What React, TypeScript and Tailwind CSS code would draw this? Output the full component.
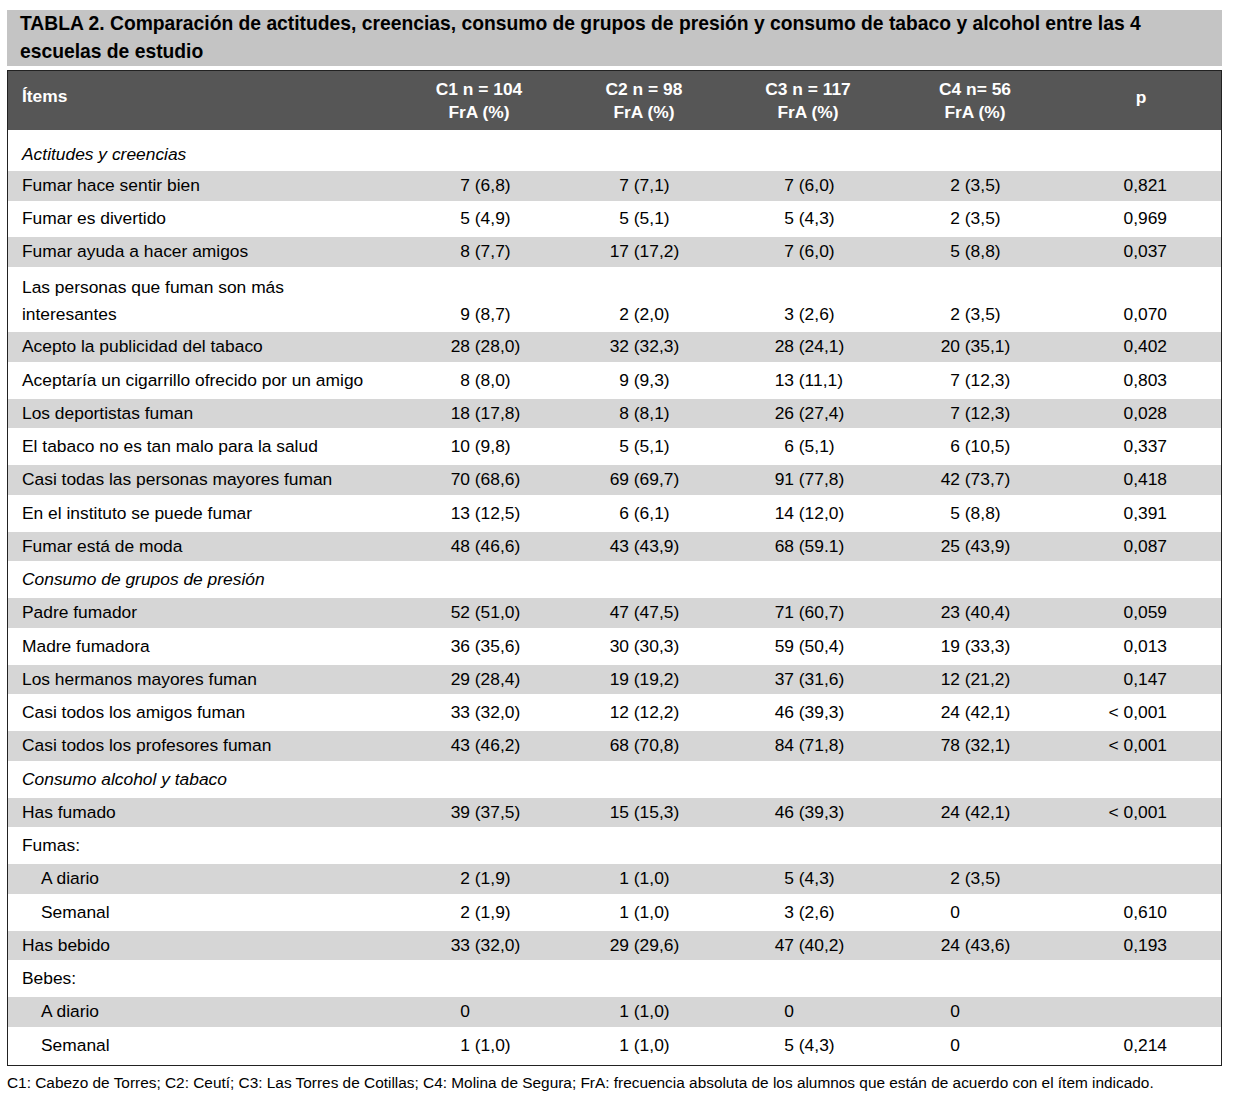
import React from "react";

type Row = {
  label: string;
  label2?: string;
  vals?: [string, string, string, string];
  p?: string;
  kind: "cat" | "row" | "sub";
  gray?: boolean;
  indent?: boolean;
  first?: boolean;
};

const rows: Row[] = [
  { label: "Actitudes y creencias", kind: "cat", first: true },
  { label: "Fumar hace sentir bien", vals: ["7 (6,8)", "7 (7,1)", "7 (6,0)", "2 (3,5)"], p: "0,821", kind: "row", gray: true },
  { label: "Fumar es divertido", vals: ["5 (4,9)", "5 (5,1)", "5 (4,3)", "2 (3,5)"], p: "0,969", kind: "row" },
  { label: "Fumar ayuda a hacer amigos", vals: ["8 (7,7)", "17 (17,2)", "7 (6,0)", "5 (8,8)"], p: "0,037", kind: "row", gray: true },
  { label: "Las personas que fuman son más", label2: "interesantes", vals: ["9 (8,7)", "2 (2,0)", "3 (2,6)", "2 (3,5)"], p: "0,070", kind: "row" },
  { label: "Acepto la publicidad del tabaco", vals: ["28 (28,0)", "32 (32,3)", "28 (24,1)", "20 (35,1)"], p: "0,402", kind: "row", gray: true },
  { label: "Aceptaría un cigarrillo ofrecido por un amigo", vals: ["8 (8,0)", "9 (9,3)", "13 (11,1)", "7 (12,3)"], p: "0,803", kind: "row" },
  { label: "Los deportistas fuman", vals: ["18 (17,8)", "8 (8,1)", "26 (27,4)", "7 (12,3)"], p: "0,028", kind: "row", gray: true },
  { label: "El tabaco no es tan malo para la salud", vals: ["10 (9,8)", "5 (5,1)", "6 (5,1)", "6 (10,5)"], p: "0,337", kind: "row" },
  { label: "Casi todas las personas mayores fuman", vals: ["70 (68,6)", "69 (69,7)", "91 (77,8)", "42 (73,7)"], p: "0,418", kind: "row", gray: true },
  { label: "En el instituto se puede fumar", vals: ["13 (12,5)", "6 (6,1)", "14 (12,0)", "5 (8,8)"], p: "0,391", kind: "row" },
  { label: "Fumar está de moda", vals: ["48 (46,6)", "43 (43,9)", "68 (59.1)", "25 (43,9)"], p: "0,087", kind: "row", gray: true },
  { label: "Consumo de grupos de presión", kind: "cat" },
  { label: "Padre fumador", vals: ["52 (51,0)", "47 (47,5)", "71 (60,7)", "23 (40,4)"], p: "0,059", kind: "row", gray: true },
  { label: "Madre fumadora", vals: ["36 (35,6)", "30 (30,3)", "59 (50,4)", "19 (33,3)"], p: "0,013", kind: "row" },
  { label: "Los hermanos mayores fuman", vals: ["29 (28,4)", "19 (19,2)", "37 (31,6)", "12 (21,2)"], p: "0,147", kind: "row", gray: true },
  { label: "Casi todos los amigos fuman", vals: ["33 (32,0)", "12 (12,2)", "46 (39,3)", "24 (42,1)"], p: "< 0,001", kind: "row" },
  { label: "Casi todos los profesores fuman", vals: ["43 (46,2)", "68 (70,8)", "84 (71,8)", "78 (32,1)"], p: "< 0,001", kind: "row", gray: true },
  { label: "Consumo alcohol y tabaco", kind: "cat" },
  { label: "Has fumado", vals: ["39 (37,5)", "15 (15,3)", "46 (39,3)", "24 (42,1)"], p: "< 0,001", kind: "row", gray: true },
  { label: "Fumas:", kind: "sub" },
  { label: "A diario", vals: ["2 (1,9)", "1 (1,0)", "5 (4,3)", "2 (3,5)"], p: "", kind: "row", gray: true, indent: true },
  { label: "Semanal", vals: ["2 (1,9)", "1 (1,0)", "3 (2,6)", "0"], p: "0,610", kind: "row", indent: true },
  { label: "Has bebido", vals: ["33 (32,0)", "29 (29,6)", "47 (40,2)", "24 (43,6)"], p: "0,193", kind: "row", gray: true },
  { label: "Bebes:", kind: "sub" },
  { label: "A diario", vals: ["0", "1 (1,0)", "0", "0"], p: "", kind: "row", gray: true, indent: true },
  { label: "Semanal", vals: ["1 (1,0)", "1 (1,0)", "5 (4,3)", "0"], p: "0,214", kind: "row", indent: true },
];

const cellW = ["w-[165px]", "w-[165px]", "w-[165px]", "w-[165px]"];
const intW = ["w-[60px]", "w-[54px]", "w-[54px]", "w-[55px]"];

function Val({ v, i }: { v: string; i: number }) {
  const idx = v.indexOf(" ");
  const a = idx >= 0 ? v.slice(0, idx) : v;
  const b = idx >= 0 ? v.slice(idx) : "";
  return (
    <div className={`${cellW[i]} flex shrink-0 whitespace-pre`}>
      <span className={`${intW[i]} text-right shrink-0`}>{a}</span>
      <span>{b}</span>
    </div>
  );
}

function BodyRow({ r }: { r: Row }) {
  const bg = r.gray ? "bg-[#d6d6d6] bg-clip-content pt-[2.5px] pb-[1px]" : "bg-white pt-[1.5px]";
  if (r.kind === "cat") {
    if (r.first) {
      return (
        <div className="h-[38.3px] pt-[10.5px] pl-[14px] italic leading-[27px] bg-white">{r.label}</div>
      );
    }
    return <div className={`h-[33.25px] flex items-center ${bg} pl-[14px] italic`}>{r.label}</div>;
  }
  if (r.kind === "sub") {
    return <div className={`h-[33.25px] flex items-center ${bg} pl-[14px]`}>{r.label}</div>;
  }
  if (r.label2) {
    return (
      <div className="h-[61.65px] pt-[6px] flex bg-white leading-[27px]">
        <div className="w-[402px] shrink-0 pl-[14px]">
          {r.label}
          <br />
          {r.label2}
        </div>
        <div className="flex pt-[27px]">
          {r.vals!.map((v, i) => (
            <Val key={i} v={v} i={i} />
          ))}
          <div className="w-[151px] shrink-0 text-right pr-[54px] whitespace-pre">{r.p}</div>
        </div>
      </div>
    );
  }
  return (
    <div className={`h-[33.25px] flex items-center ${bg}`}>
      <div className={`w-[402px] shrink-0 ${r.indent ? "pl-[33px]" : "pl-[14px]"}`}>{r.label}</div>
      {r.vals!.map((v, i) => (
        <Val key={i} v={v} i={i} />
      ))}
      <div className="w-[151px] shrink-0 text-right pr-[54px] whitespace-pre">{r.p}</div>
    </div>
  );
}

export default function App() {
  return (
    <div className="w-[1233px] h-[1116px] bg-white font-['Liberation_Sans',Arial,sans-serif] text-black text-[17.4px] leading-none pt-[10px]">
      <div className="ml-[7px] w-[1215px] h-[56px] bg-[#c4c4c4] pl-[13px] font-bold text-[19.3px] leading-[28px] text-black">
        TABLA 2. Comparación de actitudes, creencias, consumo de grupos de presión y consumo de tabaco y alcohol entre las 4
        <br />
        escuelas de estudio
      </div>
      <div className="ml-[7px] mt-[4px] w-[1215px] border border-[#222] pb-[4px]">
        <div className="h-[59px] bg-[#565656] text-white font-bold flex items-center text-[17.4px] leading-[23px]">
          <div className="w-[389px] shrink-0 pl-[14px] pb-[8px]">Ítems</div>
          <div className="w-[164px] shrink-0 text-center">C1 n = 104<br />FrA (%)</div>
          <div className="w-[166px] shrink-0 text-center">C2 n = 98<br />FrA (%)</div>
          <div className="w-[162px] shrink-0 text-center">C3 n = 117<br />FrA (%)</div>
          <div className="w-[172px] shrink-0 text-center">C4 n= 56<br />FrA (%)</div>
          <div className="w-[160px] shrink-0 text-center pb-[7px]">p</div>
        </div>
        {rows.map((r, i) => (
          <BodyRow key={i} r={r} />
        ))}
      </div>
      <div className="mt-[9px] ml-[7px] text-[15.4px] leading-none">
        C1: Cabezo de Torres; C2: Ceutí; C3: Las Torres de Cotillas; C4: Molina de Segura; FrA: frecuencia absoluta de los alumnos que están de acuerdo con el ítem indicado.
      </div>
    </div>
  );
}
